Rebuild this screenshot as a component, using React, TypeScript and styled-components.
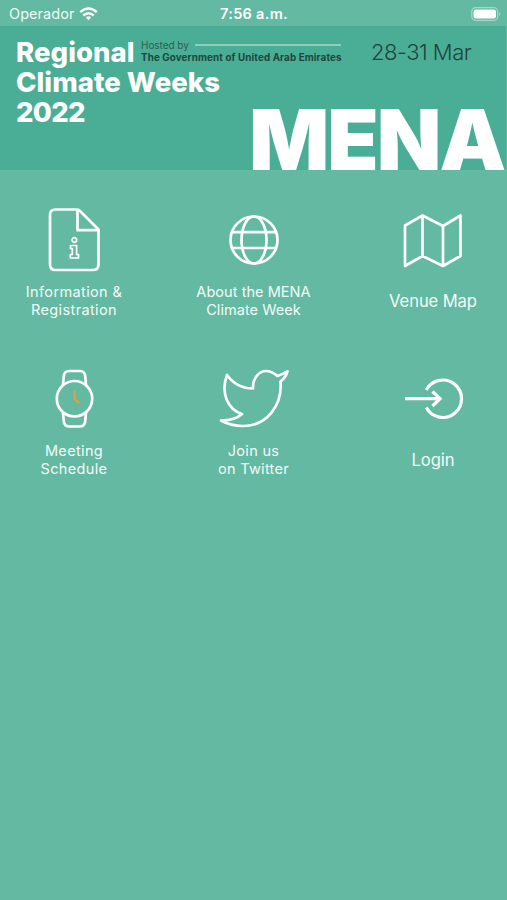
import React from 'react';
import styled, { createGlobalStyle } from 'styled-components';

const GlobalStyle = createGlobalStyle`
  * { box-sizing: border-box; }
  html, body { margin: 0; background: #63b9a2; }
  body { font-family: Inter, "Liberation Sans", sans-serif; color: #fff; }
`;

const Screen = styled.main`
  width: 507px;
  height: 900px;
  overflow: hidden;
  background: #63b9a2;
`;

const StatusBar = styled.header`
  display: grid;
  grid-template-columns: 1fr auto 1fr;
  align-items: center;
  height: 26px;
  padding: 2px 6px 0 9px;
  font-size: 14.5px;
  line-height: 24px;
`;

const Carrier = styled.div`
  display: flex;
  align-items: center;
  gap: 5px;
  letter-spacing: 0.05px;
  color: #f0faf6;
`;

const Clock = styled.div`
  font-weight: 600;
  letter-spacing: 0.3px;
  margin-right: 2px;
`;

const Battery = styled.svg`
  justify-self: end;
  display: block;
`;

const Banner = styled.section`
  width: 506px;
  height: 144px;
  background: #4aae96;
`;

const BannerTop = styled.div`
  display: flex;
  height: 41px;
  padding: 11px 0 0 16px;
`;

const BannerBottom = styled.div`
  display: flex;
  height: 103px;
  padding-left: 16px;
`;

const Title = styled.div<{ $width: number }>`
  flex: none;
  width: ${(p) => p.$width}px;
  font-size: 27.5px;
  line-height: 30px;
  font-weight: 800;
  letter-spacing: 0.05px;
  white-space: nowrap;
`;

const Year = styled.div`
  letter-spacing: -0.7px;
`;

const Host = styled.div`
  flex: none;
  width: 231px;
  padding-top: 2px;
  color: #21443d;
  white-space: nowrap;
`;

const HostedBy = styled.div`
  display: flex;
  align-items: center;
  gap: 6px;
  width: 200px;
  height: 12px;
  font-size: 10px;
  letter-spacing: -0.05px;
  color: #2b5f54;
  &::after {
    content: '';
    flex: 1;
    height: 2px;
    background: #8ccfbd;
  }
`;

const HostName = styled.div`
  font-size: 9.8px;
  line-height: 13px;
  font-weight: 700;
  letter-spacing: 0.13px;
`;

const Dates = styled.div`
  margin-left: -1px;
  font-size: 22px;
  line-height: 30px;
  font-weight: 300;
  letter-spacing: -0.5px;
  color: #21443d;
  white-space: nowrap;
`;

const Region = styled.div`
  align-self: flex-end;
  height: 72px;
  font-size: 84px;
  line-height: 84px;
  font-weight: 900;
  letter-spacing: -2px;
`;

const Menu = styled.nav`
  display: grid;
  grid-template-columns: 148px 211px 148px;
  grid-auto-rows: 158.5px;
  padding-top: 30px;
`;

const MenuItem = styled.a`
  display: flex;
  flex-direction: column;
  align-items: center;
  gap: 3px;
  color: #fff;
  text-decoration: none;
`;

const Icon = styled.svg`
  display: block;
  width: 80px;
  height: 80px;
  fill: none;
  stroke: #fff;
  stroke-width: 2.7;
  stroke-linejoin: round;
`;

const Label = styled.span<{ $size: number; $spacing: number }>`
  display: grid;
  place-items: center;
  height: 36px;
  font-size: ${(p) => p.$size}px;
  line-height: 18px;
  letter-spacing: ${(p) => p.$spacing}px;
  text-align: center;
  white-space: pre-line;
  color: #f4fcf9;
`;

const FinePath = styled.path`
  stroke-width: 1.7;
`;

const DocumentIcon = () => (
  <Icon viewBox="0 0 80 80">
    <path d="M43.5 9.5H21.5Q16 9.5 16 15V64.5Q16 70 21.5 70H59Q64.5 70 64.5 64.5V29.5L46 11Q44.500 9.500 43.500 9.500V30.200H64.500" />
    <FinePath d="M42.700 40a2.300 2.300 0 1 1-4.600 0a2.300 2.300 0 1 1 4.600 0ZM36.500 45.500H42.600V54.500H44.500V58H36.300V54.500H38.300V48.500H36.500Z" />
  </Icon>
);

const GlobeIcon = () => (
  <Icon viewBox="0 0 80 80">
    <circle cx="40" cy="40" r="23.5" />
    <ellipse cx="40" cy="40" rx="12.5" ry="23.5" />
    <path d="M18 32.200H62M18 48H62" />
  </Icon>
);

const MapIcon = () => (
  <Icon viewBox="0 0 80 80">
    <path d="M12 25.500L29.500 15.500L50 26L67.500 15.500V56L50 66L29.500 56L12 66ZM29.500 15.500V56M50 26V66" />
  </Icon>
);

const Hands = styled.path`
  stroke: #d8a047;
  stroke-linecap: round;
`;

const WatchIcon = () => (
  <Icon viewBox="0 0 80 80">
    <circle cx="40.500" cy="39.700" r="17.700" />
    <path d="M29 26L29.800 17Q30.500 12 35 12H46Q50.500 12 51.200 17L52 26M29 53.500L29.800 62.500Q30.500 67.500 35 67.500H46Q50.500 67.500 51.200 62.500L52 53.500" />
    <Hands d="M40.700 32.500V40L44.500 43.500" />
  </Icon>
);

const TwitterIcon = () => (
  <Icon viewBox="0 0 80 80">
    <path d="M39 29.500C38.500 20 44.500 12 52 12C57 12 60 14 63.500 17Q68 15.500 73.500 12.300Q72 18 66.500 22.500C68.500 46 53 67 29 67Q17 67 7 61.500Q21 61.500 28 55C13.500 50.500 6.500 34 13 16C19.500 25 28.500 29.500 39 29.500Z" />
  </Icon>
);

const ThickGroup = styled.g`
  stroke-width: 3.2;
  stroke-linejoin: miter;
`;

const LoginIcon = () => (
  <Icon viewBox="0 0 80 80">
    <ThickGroup>
      <path d="M33.300 31A18.700 18.700 0 1 1 33.300 48.500" />
      <path d="M12 39.700H47M39.500 32.500L47 39.700L39.500 47" />
    </ThickGroup>
  </Icon>
);

const items = [
  { label: 'Information &\nRegistration', Glyph: DocumentIcon, size: 14.5, spacing: 0.37 },
  { label: 'About the MENA\nClimate Week', Glyph: GlobeIcon, size: 14.5, spacing: 0.05 },
  { label: 'Venue Map', Glyph: MapIcon, size: 16.6, spacing: -0.1 },
  { label: 'Meeting\nSchedule', Glyph: WatchIcon, size: 14.5, spacing: 0.35 },
  { label: 'Join us\non Twitter', Glyph: TwitterIcon, size: 14.5, spacing: 0.3 },
  { label: 'Login', Glyph: LoginIcon, size: 16.6, spacing: -0.1 },
];

export default function App() {
  return (
    <Screen>
      <GlobalStyle />
      <StatusBar>
        <Carrier>
          Operador
          <svg width="19" height="14" viewBox="0 0 19 14" fill="none" stroke="#fff" strokeWidth="2.4">
            <path d="M1.200 5.200Q9.500-2.200 17.800 5.200M4.200 8.500Q9.500 3.800 14.800 8.500" />
            <path d="M6.800 10.500Q9.500 8.200 12.200 10.500L9.500 13.300Z" fill="#fff" stroke="none" />
          </svg>
        </Carrier>
        <Clock>7:56 a.m.</Clock>
        <Battery width="30" height="14" viewBox="0 0 30 14">
          <rect x="0.700" y="0.700" width="26" height="12.600" rx="3.800" fill="none" stroke="#a5d8ca" strokeWidth="1.200" />
          <rect x="2.500" y="2.500" width="22.500" height="9" rx="2.200" fill="#fff" />
          <path d="M28.300 5Q30.500 7 28.300 9Z" fill="#a5d8ca" />
        </Battery>
      </StatusBar>
      <Banner>
        <BannerTop>
          <Title $width={125}>Regional</Title>
          <Host>
            <HostedBy>Hosted by</HostedBy>
            <HostName>The Government of United Arab Emirates</HostName>
          </Host>
          <Dates>28-31 Mar</Dates>
        </BannerTop>
        <BannerBottom>
          <Title $width={233}>
            Climate Weeks
            <Year>2022</Year>
          </Title>
          <Region>MENA</Region>
        </BannerBottom>
      </Banner>
      <Menu>
        {items.map(({ label, Glyph, size, spacing }) => (
          <MenuItem key={label}>
            <Glyph />
            <Label $size={size} $spacing={spacing}>{label}</Label>
          </MenuItem>
        ))}
      </Menu>
    </Screen>
  );
}
